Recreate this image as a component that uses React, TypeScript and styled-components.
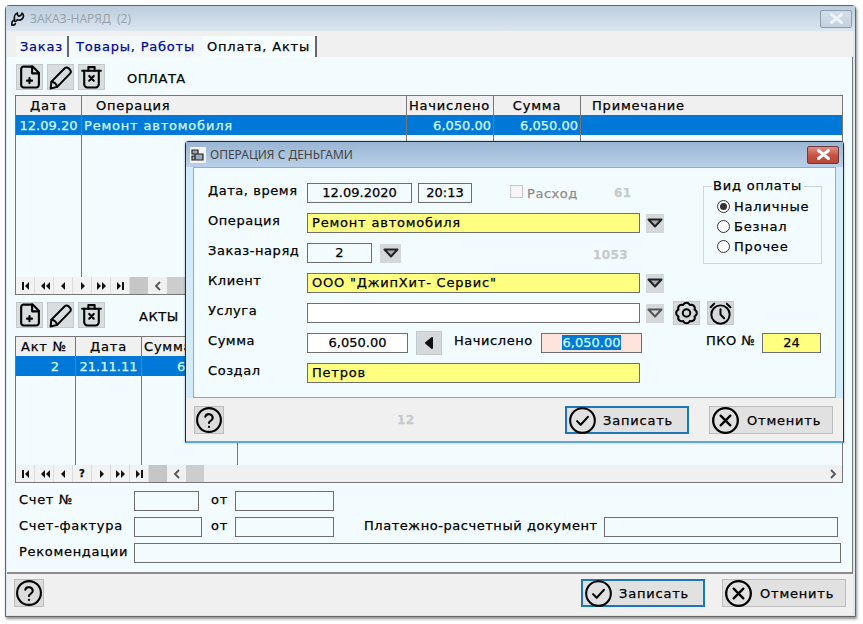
import React from "react";
import styled, { createGlobalStyle } from "styled-components";

const Global = createGlobalStyle`
  html, body { margin: 0; padding: 0; background: #fff; }
  * { box-sizing: border-box; }
  #root { width: 863px; height: 624px; position: relative; overflow: hidden;
    font-family: "DejaVu Sans", sans-serif; font-size: 13px; letter-spacing: .55px; color: #000;
    -webkit-text-stroke: .25px currentColor; }
`;

const Win = styled.div`
  margin: 5px 0 0 5px; width: 851px; height: 612px; border: 1px solid #666; border-radius: 4px 4px 0 0;
  box-shadow: 1px 2px 3px rgba(0,0,0,.45); background: #dde7f0; padding: 0 2px 1px 1px;
  display: flex; flex-direction: column;
`;
const TitleBar = styled.div`
  height: 25px; flex: none; display: flex; align-items: center; padding: 0 3px 0 4px; margin: 0 -2px 0 -1px;
  background: linear-gradient(#bccddd, #dbe6f0);
`;
const TitleText = styled.span<{ $active?: boolean }>`
  font-family: "Noto Sans", sans-serif; font-size: 12px; letter-spacing: 0; margin-left: 4px; -webkit-text-stroke: 0;
  color: ${p => (p.$active ? "#444" : "#9aa3ab")}; white-space: pre;
`;
const CloseBtn = styled.div<{ $active?: boolean }>`
  margin-left: auto; width: 32px; height: 18px; border-radius: 2px; display: flex; align-items: center; justify-content: center;
  border: 1px solid ${p => (p.$active ? "#6b3a3a" : "#8c9db0")};
  background: ${p => (p.$active ? "linear-gradient(#e08f84, #c8503f 55%, #b5493c)" : "linear-gradient(#d3dee9, #c3d1df)")};
`;
const TabStrip = styled.div`
  height: 26px; flex: none; background: #f0f0f0; display: flex; align-items: flex-end; padding-left: 9px;
`;
const Tab = styled.div<{ $active?: boolean; $w: number; $sep?: boolean }>`
  width: ${p => p.$w}px; height: 21px; display: flex; align-items: center; justify-content: center; flex: none;
  letter-spacing: .8px; padding-bottom: 1px;
  color: ${p => (p.$active ? "#000" : "#000a90")};
  background: ${p => (p.$active ? "#f6fdff" : "#f3f8fa")};
  border-right: ${p => (p.$sep ? "2px solid #666" : "none")};
`;
const TabPage = styled.div`
  flex: 1; min-height: 0; background: #f2fcff; border-bottom: 2px solid #8a8a8a; border-right: 1px solid #777;
  padding: 7px 10px 0 8px; display: flex; flex-direction: column;
`;
const Toolbar = styled.div<{ $mt?: number }>`
  display: flex; align-items: center; height: 26px; flex: none; gap: 4px; padding-left: 1px; margin-top: ${p => p.$mt ?? 0}px;
`;
const ToolBtn = styled.div`
  width: 27px; height: 26px; background: #d8dde0; border: 1px solid #c4c9cc; display: flex; align-items: center; justify-content: center; flex: none;
`;
const ToolTitle = styled.span<{ $ml: number }>` margin-left: ${p => p.$ml}px; font-size: 13px; position: relative; top: 1px; `;

const Table = styled.div<{ $h: number; $mt: number }>`
  height: ${p => p.$h}px; margin-top: ${p => p.$mt}px; width: 828px; flex: none; border: 1px solid #777;
  display: flex; flex-direction: column; background: #f2fcff;
`;
const Cols = styled.div` flex: 1; min-height: 0; display: flex; `;
const Col = styled.div<{ $w?: number; $last?: boolean }>`
  ${p => (p.$w ? `width:${p.$w}px; flex:none;` : "flex:1;")}
  display: flex; flex-direction: column;
  border-right: ${p => (p.$last ? "none" : "1px solid #777")};
`;
const HeadCell = styled.div<{ $pl?: number; $center?: boolean }>`
  height: 19px; flex: none; background: #f0f0f0; display: flex; align-items: center; padding-left: ${p => p.$pl ?? 0}px;
  justify-content: ${p => (p.$center ? "center" : "flex-start")}; white-space: nowrap; overflow: hidden; letter-spacing: .8px;
`;
const RowCell = styled.div<{ $right?: boolean; $center?: boolean; $pl?: number; $pr?: number; $num?: boolean }>`
  height: 20px; flex: none; background: #0078d7; color: #d2fbff; display: flex; align-items: center; white-space: nowrap;
  justify-content: ${p => (p.$right ? "flex-end" : p.$center ? "center" : "flex-start")};
  padding: 0 ${p => p.$pr ?? (p.$right ? 2 : 0)}px 0 ${p => p.$pl ?? 0}px;
  letter-spacing: ${p => (p.$num ? "0" : ".8px")};
`;
const Footer = styled.div` height: 17px; flex: none; display: flex; background: #f0f0f0; `;
const NavCell = styled.div`
  width: 19px; flex: none; display: flex; align-items: center; justify-content: center; background: #f2f2f2; border-right: 1px solid #dcdcdc;
  font-size: 10px; font-weight: 700; letter-spacing: 0;
`;
const ScrollDark = styled.div` width: 18px; flex: none; background: #c6c6c6; `;
const ScrollArrow = styled.div<{ $ml?: number; $w?: number }>`
  width: ${p => p.$w ?? 18}px; flex: none; display: flex; align-items: center; justify-content: center;
  ${p => (p.$ml ? `margin-left:${p.$ml}px;` : "")}
`;
const Thumb = styled.div` width: 18px; flex: none; background: #cdcdcd; `;
const Spacer = styled.div` flex: 1; `;

const InfoRow = styled.div<{ $mt: number }>` display: flex; align-items: center; height: 20px; flex: none; margin-top: ${p => p.$mt}px; padding-left: 4px; `;
const InfoLabel = styled.span<{ $w?: number; $ml?: number; $tight?: boolean }>`
  ${p => (p.$w ? `width:${p.$w}px;` : "")} ${p => (p.$ml ? `margin-left:${p.$ml}px;` : "")}
  flex: none; white-space: nowrap; padding-bottom: 3px; letter-spacing: ${p => (p.$tight ? ".55px" : ".7px")};
`;
const Field = styled.div<{ $w: number; $bg?: string; $align?: string; $ml?: number; $pl?: number; $border?: string; $num?: boolean }>`
  width: ${p => p.$w}px; height: 20px; flex: none; display: flex; align-items: center; white-space: nowrap;
  margin-left: ${p => p.$ml ?? 0}px; padding: 0 4px 2px ${p => p.$pl ?? 4}px;
  border: 1px solid ${p => p.$border ?? "#6e6e6e"}; background: ${p => p.$bg ?? "transparent"};
  justify-content: ${p => p.$align ?? "flex-start"}; letter-spacing: ${p => (p.$num ? "0" : ".8px")};
`;
const Selected = styled.span` background: #0078d7; color: #d2fbff; padding: 0 1px; `;

const BottomBar = styled.div<{ $pl: number; $pr: number; $pt: number; $h?: number }>`
  ${p => (p.$h ? `height:${p.$h}px; flex:none;` : "flex:1;")}
  background: #f0f0f0; display: flex; align-items: flex-start; padding: ${p => p.$pt}px ${p => p.$pr}px 0 ${p => p.$pl}px;
`;
const HelpBtn = styled.div`
  width: 30px; height: 28px; background: #dcdcdc; border: 1px solid #bdbdbd; display: flex; align-items: center; justify-content: center; flex: none;
`;
const Action = styled.div<{ $primary?: boolean; $ml?: string }>`
  width: 124px; height: 28px; flex: none; background: #e1e1e1; display: flex; align-items: center; padding-left: 1px;
  border: ${p => (p.$primary ? "2px solid #1c78b4" : "1px solid #bdbdbd")}; margin-left: ${p => p.$ml ?? "0"};
  gap: ${p => (p.$primary ? 6 : 7)}px; letter-spacing: .8px;
`;

const Dialog = styled.div`
  position: absolute; left: 185px; top: 141px; width: 659px; height: 302px; border: 1px solid #2a2a2a; border-bottom: 2px solid #5fa8d8; border-radius: 4px 4px 0 0;
  background: #d4ebf9; display: flex; flex-direction: column; z-index: 2; box-shadow: 0 0 2px rgba(0,0,0,.4);
`;
const DlgTitle = styled.div`
  height: 25px; flex: none; display: flex; align-items: center; padding: 0 4px 0 4px;
  background: linear-gradient(#99b6d4, #b9d0e8);
`;
const DlgBody = styled.div`
  height: 231px; flex: none; margin: 0 7px; background: #f2fcff; border: 1px solid #a8a8a8; border-bottom-color: #a0a0a0; padding: 15px 0 0 14px;
  display: grid; grid-template-columns: 495px 119px; grid-auto-rows: 20px; row-gap: 10px;
`;
const FormRow = styled.div<{ $wide?: boolean }>`
  grid-column: ${p => (p.$wide ? "1 / -1" : "1")}; display: flex; align-items: center; height: 20px;
`;
const FLabel = styled.span<{ $w?: number; $ml?: number; $muted?: boolean }>`
  width: ${p => (p.$w ? `${p.$w}px` : "99px")}; flex: none; white-space: nowrap;
  padding-bottom: ${p => (p.$muted ? 0 : 6)}px;
  margin-left: ${p => p.$ml ?? 0}px; color: ${p => (p.$muted ? "#8c8c8c" : "#000")};
`;
const Ghost = styled.span<{ $ml?: number; $mt?: number }>`
  color: #c4cacc; font-weight: 700; letter-spacing: .4px; font-size: 12px; margin-left: ${p => p.$ml ?? 0}px; margin-top: ${p => p.$mt ?? 0}px; flex: none;
`;
const Check = styled.span`
  width: 13px; height: 13px; margin-left: 38px; margin-right: 4px; flex: none; border: 1px solid #c8c8c8; background: #f6f6f6; position: relative; top: -2px;
`;
const Drop = styled.div<{ $ml?: number; $w?: number }>`
  width: ${p => p.$w ?? 18}px; height: 19px; margin-left: ${p => p.$ml ?? 6}px; background: #d5d8da; flex: none; display: flex; align-items: center; justify-content: center;
`;
const SmallBtn = styled.div<{ $ml: number; $w?: number; $h?: number }>`
  width: ${p => p.$w ?? 27}px; height: ${p => p.$h ?? 24}px; margin-left: ${p => p.$ml}px; background: #d6d9db; border: 1px solid #c6c9cb; flex: none;
  display: flex; align-items: center; justify-content: center;
`;
const Group = styled.fieldset`
  grid-column: 2; grid-row: 1 / span 3; margin: -4px 0 0 0; padding: 6px 0 0 13px; height: 85px; border: 1px solid #cfd6d9; min-width: 0; width: 119px;
  display: flex; flex-direction: column; gap: 6px; position: relative;
`;
const GroupTitle = styled.legend` padding: 0 2px 0 1px; margin-left: -5px; font-size: 13px; line-height: 14px; letter-spacing: .8px; `;
const RadioRow = styled.div` display: flex; align-items: center; height: 14px; gap: 4px; letter-spacing: .8px; `;
const Radio = styled.span<{ $on?: boolean }>`
  width: 13px; height: 13px; border-radius: 50%; border: 1px solid #333; background: #fff; flex: none; display: flex; align-items: center; justify-content: center;
  &::after { content: ""; width: 7px; height: 7px; border-radius: 50%; background: ${p => (p.$on ? "#333" : "transparent")}; }
`;

const Ico = ({ children, s = 24, w = 2 }: { children: React.ReactNode; s?: number; w?: number }) => (
  <svg width={s} height={s} viewBox="0 0 24 24" fill="none" stroke="#000" strokeWidth={w} strokeLinecap="round" strokeLinejoin="round">{children}</svg>
);
const DocPlus = () => (
  <Ico s={26}><path d="M7 2h8l6 6v11.5A2.5 2.5 0 0 1 18.5 22h-12A2.5 2.5 0 0 1 4 19.5v-15A2.5 2.5 0 0 1 7 2z" /><path d="M14.5 2v6.5H21" /><path d="M9.5 15.5h5M12 13v5" /></Ico>
);
const Pencil = () => (
  <Ico s={27} w={1.9}><path d="M2.5 22.5l.8-6.5L15.8 3.4a3 3 0 0 1 4.2 0l.9.9a3 3 0 0 1 0 4.2L8.8 21z" /><path d="M3.3 16c2.6.2 4.8 2.4 5.5 5" /></Ico>
);
const Trash = () => (
  <Ico s={26}><path d="M3 6h18" /><path d="M9 6V2.5h6V6" /><path d="M5 6v13a3 3 0 0 0 3 3h8a3 3 0 0 0 3-3V6" /><path d="M9.8 11l4.4 4.6M14.2 11l-4.4 4.6" /></Ico>
);
const Help = () => (
  <Ico s={28} w={1.8}><circle cx="12" cy="12" r="10.2" /><path d="M8.8 9.2a3.3 3.3 0 0 1 6.4 1c0 2.2-3.2 2.6-3.2 4.4" /><path d="M12 17.8v.1" /></Ico>
);
const OkIcon = () => (
  <Ico s={29} w={1.7}><circle cx="12" cy="12" r="10.2" /><path d="M7.5 12.5l3 3 6-6.5" /></Ico>
);
const CancelIcon = () => (
  <Ico s={29} w={1.9}><circle cx="12" cy="12" r="10.2" /><path d="M8 8l8 8M16 8l-8 8" /></Ico>
);
const lobes = (() => {
  const pts = Array.from({ length: 8 }, (_, k) => {
    const a = ((22.5 + 45 * k) * Math.PI) / 180;
    return `${(12 + 8.3 * Math.cos(a)).toFixed(2)} ${(12 + 8.3 * Math.sin(a)).toFixed(2)}`;
  });
  return `M${pts[0]} ` + pts.slice(1).concat(pts[0]).map(p => `A3.4 3.4 0 0 1 ${p}`).join(" ") + "z";
})();
const Gear = () => (
  <Ico s={26} w={1.9}><path d={lobes} /><circle cx="12" cy="12" r="3.6" /></Ico>
);
const Alarm = () => (
  <Ico s={27} w={1.9}><circle cx="12" cy="13" r="8.8" /><path d="M12 8v5l3.5 3.5" /><path d="M2.5 6l3.5-3.5M21.5 6L18 2.5" /></Ico>
);
const Tri = ({ muted }: { muted?: boolean }) => (
  <svg width="16" height="10" viewBox="0 0 16 10"><path d="M1.5 1.5h13L8 8.5z" fill={muted ? "#d5d8da" : "#a9adaf"} stroke={muted ? "#555" : "#222"} strokeWidth="2" strokeLinejoin="round" /></svg>
);
const X = ({ c }: { c: string }) => (
  <svg width="15" height="11" viewBox="0 0 15 11"><path d="M2.5 1.5l10 8M12.5 1.5l-10 8" stroke={c} strokeWidth="3" strokeLinecap="round" /></svg>
);
const Wrench = () => (
  <svg width="16" height="16" viewBox="0 0 16 16" fill="none" stroke="#111" strokeWidth="1.7" strokeLinejoin="round" strokeLinecap="round"><path d="M2 14c-.6-2.6.6-4.4 2.6-5.2C4 6.4 4.6 3 7.4 2c-.3 1.600 0 2.600 1.600 3.200 1.300-.4 2.600-1.500 3.100-3 1.800 1.500 1.900 4.200-.1 5.800-1.500 1.200-3.300 1.200-4.600.7-.9 1.600-2.200 2-2.900 1.400" /><path d="M2 14c1.200.4 2.500 0 3.400-1.300" /></svg>
);
const DlgIcon = () => (
  <svg width="16" height="16" viewBox="0 0 16 16"><rect width="16" height="16" fill="#f4f4f4" /><path d="M2 3h6v4H2zM5 7h8v6H5zM2 9h3v4H2z" fill="#9ab" stroke="#222" strokeWidth="1.2" /></svg>
);

type NavKind = "first" | "prev2" | "prev" | "q" | "next" | "next2" | "last";
const navPaths: Record<Exclude<NavKind, "q">, string> = {
  first: "M2 1v8h2V1zM9 1v8L5 5z",
  prev2: "M6 1v8L2 5zM11 1v8L7 5z",
  prev: "M7 1v8L3 5z",
  next: "M4 1v8l4-4z",
  next2: "M1 1v8l4-4zM6 1v8l4-4z",
  last: "M2 1v8l4-4zM7 1v8h2V1z",
};
const Nav = ({ kinds }: { kinds: NavKind[] }) => (
  <>
    {kinds.map(k => (
      <NavCell key={k}>
        {k === "q" ? "?" : <svg width="11" height="10" viewBox="0 0 11 10"><path d={navPaths[k]} fill="#111" /></svg>}
      </NavCell>
    ))}
  </>
);
const Chev = ({ right }: { right?: boolean }) => (
  <svg width="8" height="10" viewBox="0 0 8 10" fill="none"><path d={right ? "M2 1l4 4-4 4" : "M6 1L2 5l4 4"} stroke="#555" strokeWidth="1.8" /></svg>
);
const Scroll = ({ kinds }: { kinds: NavKind[] }) => (
  <Footer>
    <Nav kinds={kinds} />
    <ScrollDark />
    <ScrollArrow $ml={1}><Chev /></ScrollArrow>
    <Thumb />
    <Spacer />
    <ScrollArrow><Chev right /></ScrollArrow>
  </Footer>
);

const Tools = ({ title, ml }: { title: string; ml: number }) => (
  <>
    <ToolBtn><DocPlus /></ToolBtn>
    <ToolBtn><Pencil /></ToolBtn>
    <ToolBtn><Trash /></ToolBtn>
    <ToolTitle $ml={ml}>{title}</ToolTitle>
  </>
);

export default function App() {
  return (
    <>
      <Global />
      <Win>
        <TitleBar>
          <Wrench />
          <TitleText>{"ЗАКАЗ-НАРЯД  (2)"}</TitleText>
          <CloseBtn><X c="#eef3f8" /></CloseBtn>
        </TitleBar>
        <TabStrip>
          <Tab $w={53} $sep>Заказ</Tab>
          <Tab $w={133}>Товары, Работы</Tab>
          <Tab $w={115} $active $sep>Оплата, Акты</Tab>
        </TabStrip>
        <TabPage>
          <Toolbar><Tools title="ОПЛАТА" ml={18} /></Toolbar>
          <Table $h={200} $mt={5}>
            <Cols>
              <Col $w={66}><HeadCell $center>Дата</HeadCell><RowCell $center $num>12.09.20</RowCell></Col>
              <Col $w={325}><HeadCell $pl={14}>Операция</HeadCell><RowCell $pl={2}>Ремонт автомобиля</RowCell></Col>
              <Col $w={87}><HeadCell $pl={2}>Начислено</HeadCell><RowCell $right $num>6,050.00</RowCell></Col>
              <Col $w={87}><HeadCell $center>Сумма</HeadCell><RowCell $right $num>6,050.00</RowCell></Col>
              <Col $last><HeadCell $pl={11}>Примечание</HeadCell><RowCell /></Col>
            </Cols>
            <Scroll kinds={["first", "prev2", "prev", "next", "next2", "last"]} />
          </Table>
          <Toolbar $mt={7}><Tools title="АКТЫ" ml={30} /></Toolbar>
          <Table $h={147} $mt={8}>
            <Cols>
              <Col $w={60}><HeadCell $pl={5}>Акт №</HeadCell><RowCell $right $num $pr={16}>2</RowCell></Col>
              <Col $w={66}><HeadCell $center>Дата</HeadCell><RowCell $center $num>21.11.11</RowCell></Col>
              <Col $w={96}><HeadCell $pl={2}>Сумма</HeadCell><RowCell $right $num>6,050.00</RowCell></Col>
              <Col $last><HeadCell /><RowCell /></Col>
            </Cols>
            <Scroll kinds={["first", "prev2", "prev", "q", "next", "next2", "last"]} />
          </Table>
          <InfoRow $mt={8}>
            <InfoLabel $w={115}>Счет №</InfoLabel>
            <Field $w={65} />
            <InfoLabel $ml={12} $w={24}>от</InfoLabel>
            <Field $w={99} />
          </InfoRow>
          <InfoRow $mt={6}>
            <InfoLabel $w={115}>Счет-фактура</InfoLabel>
            <Field $w={68} />
            <InfoLabel $ml={9} $w={24}>от</InfoLabel>
            <Field $w={99} />
            <InfoLabel $ml={30} $w={240} $tight>Платежно-расчетный документ</InfoLabel>
            <Field $w={234} />
          </InfoRow>
          <InfoRow $mt={6}>
            <InfoLabel $w={115}>Рекомендации</InfoLabel>
            <Field $w={707} />
          </InfoRow>
        </TabPage>
        <BottomBar $pl={7} $pr={7} $pt={5} $h={41}>
          <HelpBtn><Help /></HelpBtn>
          <Action $primary $ml="auto"><OkIcon /><span>Записать</span></Action>
          <Action $ml="17px"><CancelIcon /><span>Отменить</span></Action>
        </BottomBar>
      </Win>

      <Dialog>
        <DlgTitle>
          <DlgIcon />
          <TitleText $active>ОПЕРАЦИЯ С ДЕНЬГАМИ</TitleText>
          <CloseBtn $active><X c="#fff" /></CloseBtn>
        </DlgTitle>
        <DlgBody>
          <FormRow>
            <FLabel>Дата, время</FLabel>
            <Field $w={105} $align="center" $num>12.09.2020</Field>
            <Field $w={54} $ml={6} $align="center" $num>20:13</Field>
            <Check />
            <FLabel $w={87} $muted>Расход</FLabel>
            <Ghost>61</Ghost>
          </FormRow>
          <Group>
            <GroupTitle>Вид оплаты</GroupTitle>
            <RadioRow><Radio $on />Наличные</RadioRow>
            <RadioRow><Radio />Безнал</RadioRow>
            <RadioRow><Radio />Прочее</RadioRow>
          </Group>
          <FormRow>
            <FLabel>Операция</FLabel>
            <Field $w={333} $bg="#ffff80">Ремонт автомобиля</Field>
            <Drop><Tri /></Drop>
          </FormRow>
          <FormRow>
            <FLabel>Заказ-наряд</FLabel>
            <Field $w={65} $align="center" $num>2</Field>
            <Drop $ml={8} $w={21}><Tri /></Drop>
            <Ghost $ml={192} $mt={3}>1053</Ghost>
          </FormRow>
          <FormRow $wide>
            <FLabel>Клиент</FLabel>
            <Field $w={333} $bg="#ffff80">ООО "ДжипХит- Сервис"</Field>
            <Drop><Tri /></Drop>
          </FormRow>
          <FormRow $wide>
            <FLabel>Услуга</FLabel>
            <Field $w={333} $bg="#fff" />
            <Drop><Tri muted /></Drop>
            <SmallBtn $ml={9}><Gear /></SmallBtn>
            <SmallBtn $ml={7}><Alarm /></SmallBtn>
          </FormRow>
          <FormRow $wide>
            <FLabel>Сумма</FLabel>
            <Field $w={101} $bg="#fff" $align="center" $num>6,050.00</Field>
            <SmallBtn $ml={8} $w={26}>
              <svg width="12" height="14" viewBox="0 0 12 14"><path d="M9 2v10L3 7z" fill="#111" stroke="#111" strokeWidth="2" strokeLinejoin="round" /></svg>
            </SmallBtn>
            <FLabel $ml={12} $w={87}>Начислено</FLabel>
            <Field $w={101} $bg="#fde5de" $align="center" $num><Selected>6,050.00</Selected></Field>
            <FLabel $ml={64} $w={56}>ПКО №</FLabel>
            <Field $w={59} $bg="#ffff80" $align="center" $num>24</Field>
          </FormRow>
          <FormRow $wide>
            <FLabel>Создал</FLabel>
            <Field $w={333} $bg="#ffff80">Петров</Field>
          </FormRow>
        </DlgBody>
        <BottomBar $pl={8} $pr={10} $pt={8}>
          <HelpBtn><Help /></HelpBtn>
          <Ghost $ml={173} $mt={7}>12</Ghost>
          <Action $primary $ml="auto"><OkIcon /><span>Записать</span></Action>
          <Action $ml="20px"><CancelIcon /><span>Отменить</span></Action>
        </BottomBar>
      </Dialog>
    </>
  );
}
